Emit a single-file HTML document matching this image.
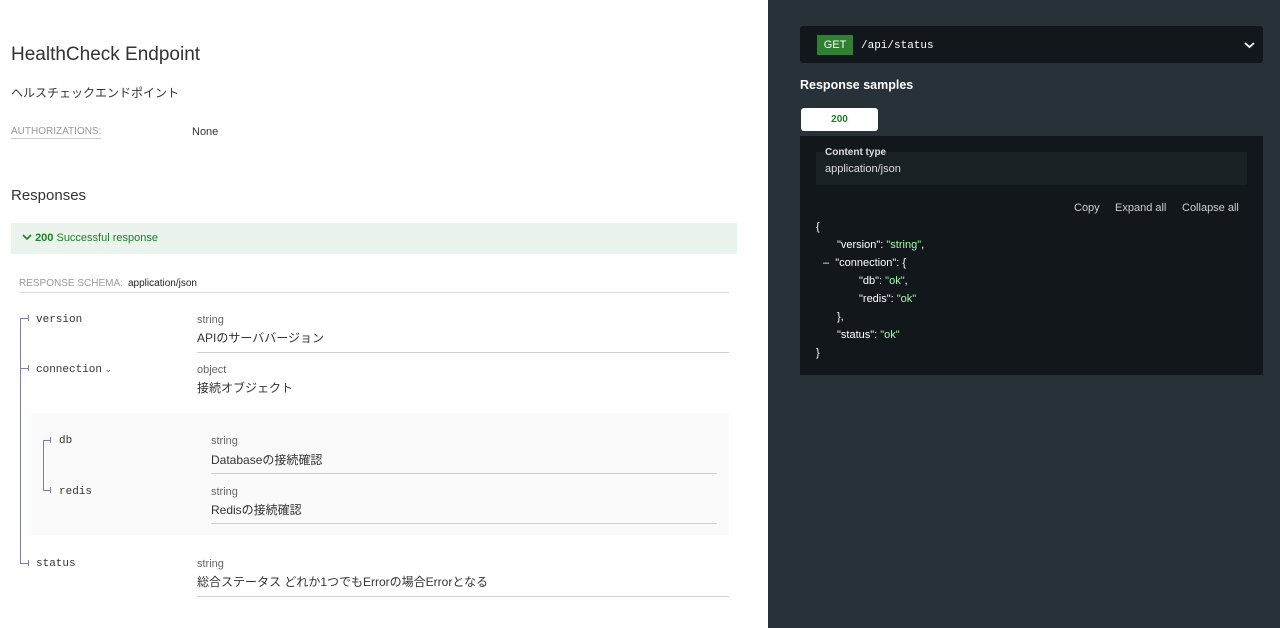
<!DOCTYPE html>
<html><head><meta charset="utf-8"><style>
*{margin:0;padding:0;box-sizing:border-box}
body{width:1280px;height:628px;overflow:hidden;font-family:"Liberation Sans","Noto Sans CJK JP",sans-serif;background:#fff;position:relative;color:#333}
.a{position:absolute;white-space:nowrap}
.mono{font-family:"Liberation Mono",monospace}
.right{position:absolute;left:768px;top:0;width:512px;height:628px;background:#263238}
.line{position:absolute;background:#7c7cbb}
.sep{position:absolute;height:1px;background:#c6d0d6}
.t{font-size:11px;color:#666}
.d{font-size:12px;color:#333}
.f{font-size:11px;color:#333;font-family:"Liberation Mono",monospace}
.w{color:#fff}
.g{color:#a0fbaa}
</style></head><body>
<div class="a" style="left:11px;top:44px;font-size:19px;color:#333">HealthCheck Endpoint</div>
<div class="a" style="left:11px;top:84px;font-size:12px">ヘルスチェックエンドポイント</div>
<div class="a" style="left:11px;top:126px;font-size:10px;color:#999;border-bottom:1px solid #ccc;padding-bottom:1px">AUTHORIZATIONS:</div>
<div class="a" style="left:192px;top:126px;font-size:11px">None</div>
<div class="a" style="left:11px;top:187px;font-size:15px">Responses</div>
<div class="a" style="left:11px;top:223px;width:726px;height:31px;background:#eaf3ec"></div>
<div class="a" style="left:22px;top:232px;font-size:11px;color:#1d8127"><svg width="10" height="8" viewBox="0 0 10 8" style="vertical-align:0"><path d="M1 2l4 4 4-4" stroke="#1d8127" stroke-width="1.6" fill="none"/></svg> <b>200</b> Successful response</div>
<div class="a" style="left:19px;top:278px;font-size:10px;color:#999">RESPONSE SCHEMA:</div>
<div class="a" style="left:128px;top:278px;font-size:10px;color:#222">application/json</div>
<div class="sep" style="left:19px;top:292px;width:710px;background:#ddd"></div>

<div class="line" style="left:20px;top:318px;width:1px;height:245px"></div>
<div class="line" style="left:20px;top:318px;width:8px;height:1px"></div>
<div class="line" style="left:28px;top:315px;width:1px;height:6px"></div>
<div class="line" style="left:20px;top:368px;width:8px;height:1px"></div>
<div class="line" style="left:28px;top:365px;width:1px;height:6px"></div>
<div class="line" style="left:20px;top:563px;width:8px;height:1px"></div>
<div class="line" style="left:28px;top:560px;width:1px;height:6px"></div>

<div class="a f" style="left:36px;top:314px">version</div>
<div class="a t" style="left:197px;top:314px">string</div>
<div class="a d" style="left:197px;top:329px">APIのサーババージョン</div>
<div class="sep" style="left:197px;top:352px;width:532px"></div>
<div class="a f" style="left:36px;top:364px">connection<span style="font-family:'Liberation Sans';font-size:9px;color:#666"> ⌄</span></div>
<div class="a t" style="left:197px;top:364px">object</div>
<div class="a d" style="left:197px;top:379px">接続オブジェクト</div>

<div class="a" style="left:31px;top:413px;width:698px;height:122px;background:#fafafa"></div>
<div class="line" style="left:43px;top:440px;width:1px;height:51px"></div>
<div class="line" style="left:43px;top:440px;width:7px;height:1px"></div>
<div class="line" style="left:50px;top:437px;width:1px;height:6px"></div>
<div class="line" style="left:43px;top:490px;width:7px;height:1px"></div>
<div class="line" style="left:50px;top:487px;width:1px;height:6px"></div>
<div class="a f" style="left:59px;top:435px">db</div>
<div class="a t" style="left:211px;top:435px">string</div>
<div class="a d" style="left:211px;top:451px">Databaseの接続確認</div>
<div class="sep" style="left:211px;top:473px;width:506px"></div>
<div class="a f" style="left:59px;top:486px">redis</div>
<div class="a t" style="left:211px;top:486px">string</div>
<div class="a d" style="left:211px;top:501px">Redisの接続確認</div>
<div class="sep" style="left:211px;top:523px;width:506px"></div>

<div class="a f" style="left:36px;top:558px">status</div>
<div class="a t" style="left:197px;top:558px">string</div>
<div class="a d" style="left:197px;top:573px">総合ステータス どれか1つでもErrorの場合Errorとなる</div>
<div class="sep" style="left:197px;top:596px;width:532px"></div>

<div class="right">
<div class="a" style="left:32px;top:26px;width:463px;height:37px;background:#11171a;border-radius:3px"></div>
<div class="a" style="left:49px;top:35px;width:36px;height:20px;background:#2f8132;color:#fff;font-size:11px;text-align:center;line-height:20px">GET</div>
<div class="a mono" style="left:93px;top:40px;font-size:11px;color:#fff">/api/status</div>
<svg class="a" style="left:476px;top:41px" width="11" height="8" viewBox="0 0 11 8"><path d="M1 2l4.5 4 4.5-4" stroke="#fff" stroke-width="1.8" fill="none"/></svg>
<div class="a" style="left:32px;top:78px;font-size:12.5px;font-weight:bold;color:#fff">Response samples</div>
<div class="a" style="left:33px;top:108px;width:77px;height:23px;background:#fff;border-radius:3px;color:#1d8127;font-size:10px;font-weight:bold;text-align:center;line-height:23px">200</div>
<div class="a" style="left:32px;top:136px;width:463px;height:239px;background:#11171a"></div>
<div class="a" style="left:48px;top:152px;width:431px;height:33px;background:#1a2125"></div>
<div class="a" style="left:57px;top:147px;font-size:10px;font-weight:bold;color:#ddd">Content type</div>
<div class="a" style="left:57px;top:163px;font-size:11px;color:#ddd">application/json</div>
<div class="a" style="left:306px;top:202px;font-size:11px;color:#ccc">Copy</div>
<div class="a" style="left:347px;top:202px;font-size:11px;color:#ccc">Expand all</div>
<div class="a" style="left:414px;top:202px;font-size:11px;color:#ccc">Collapse all</div>
<div class="a w" style="left:48px;top:218px;font-size:11px;line-height:18px;color:#fff">{<br>
<span style="padding-left:21px">"version": <span class="g">"string"</span>,</span><br>
<span style="padding-left:7px">–&nbsp; "connection": {</span><br>
<span style="padding-left:43px">"db": <span class="g">"ok"</span>,</span><br>
<span style="padding-left:43px">"redis": <span class="g">"ok"</span></span><br>
<span style="padding-left:21px">},</span><br>
<span style="padding-left:21px">"status": <span class="g">"ok"</span></span><br>}</div>
</div>
</body></html>
